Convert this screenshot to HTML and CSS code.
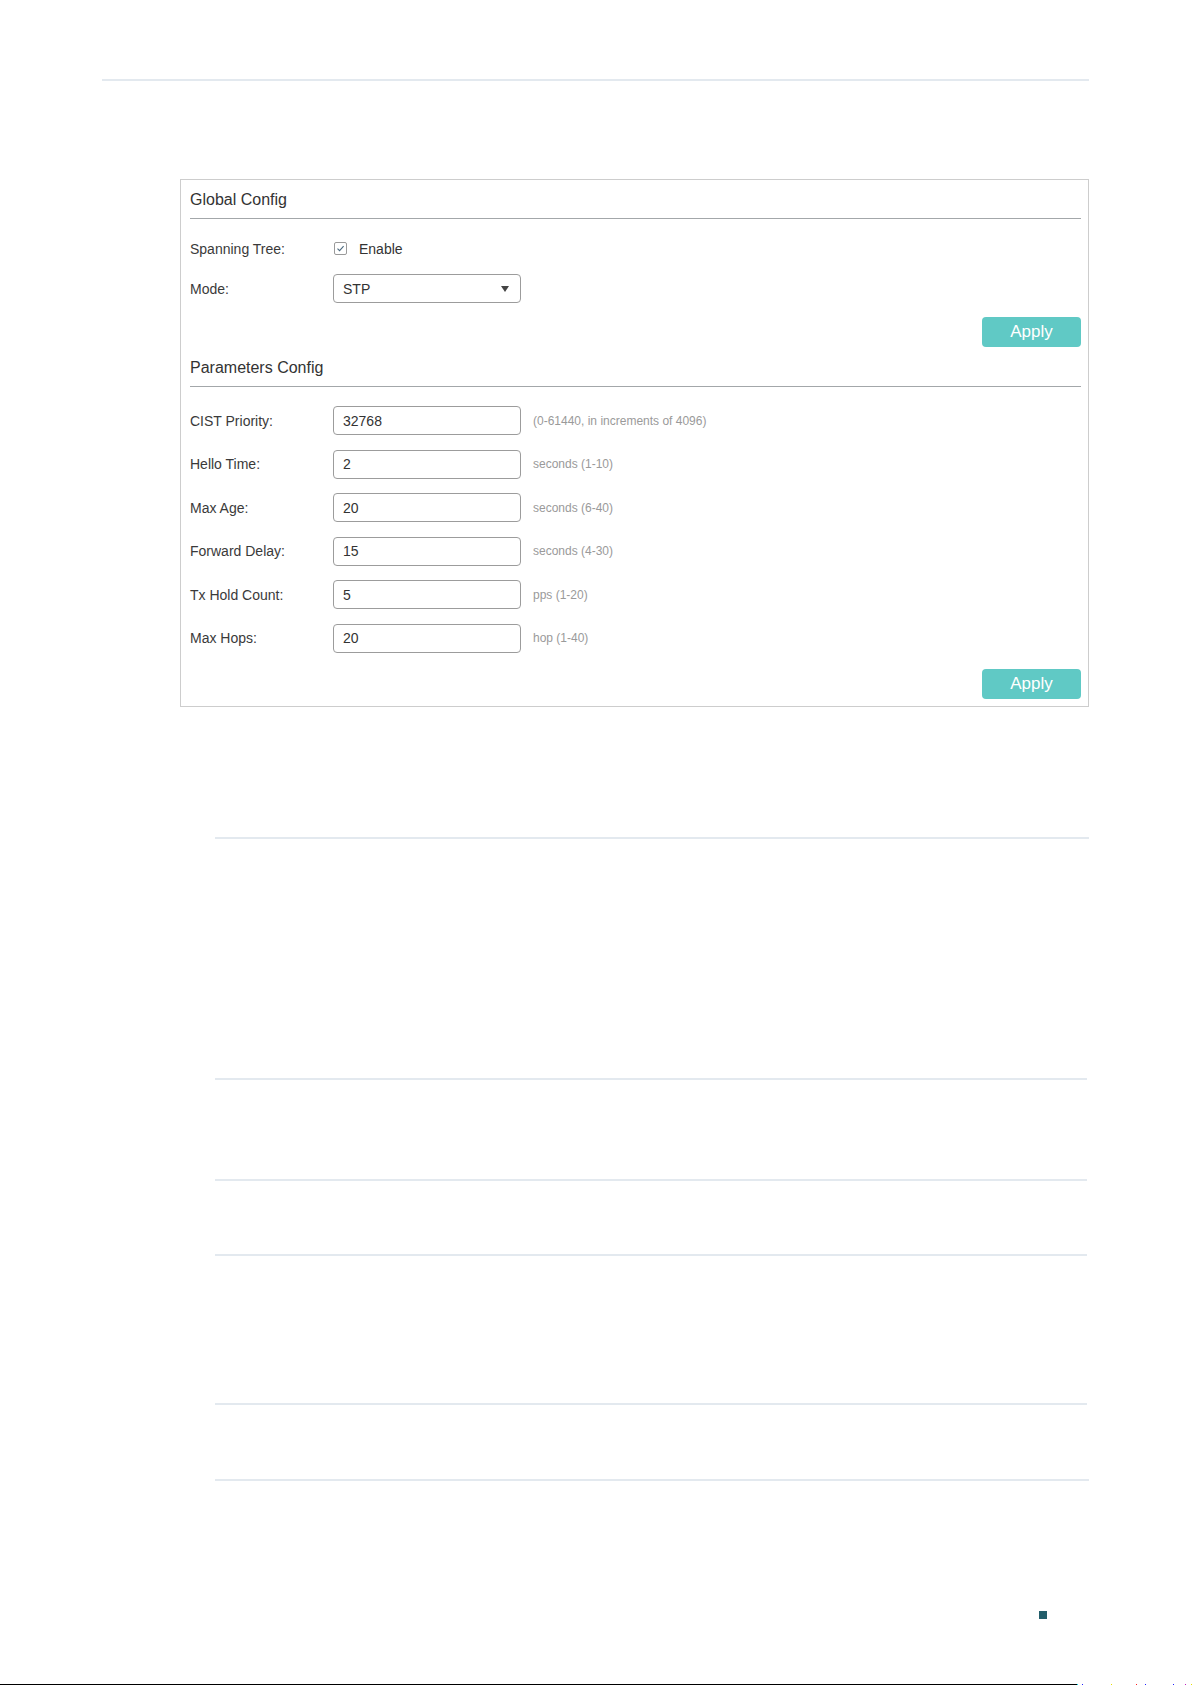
FILE: index.html
```html
<!DOCTYPE html>
<html lang="en">
<head>
    <meta charset="UTF-8">
    <meta name="viewport" content="width=device-width, initial-scale=1.0">
    <title>Spanning Tree</title>

    <link rel="stylesheet" href="styles.css">
</head>
<body>
    <div class="rule rule-top"></div>

    <form class="panel">
        <div class="section-title">Global Config</div>
        <div class="global-rows">
            <div class="row">
                <label class="label">Spanning Tree:</label>
                <label class="check">
                    <span class="box">
                        <svg width="9" height="9" viewBox="0 0 9 9"><path d="M1.5 4.6 L3.6 6.7 L7.6 2.2" fill="none" stroke="#4d6b80" stroke-width="1.1"/></svg>
                    </span>
                    Enable
                </label>
            </div>
            <div class="row">
                <label class="label">Mode:</label>
                <div class="select">
                    <span>STP</span>
                    <span class="caret"></span>
                </div>
            </div>
        </div>
        <div class="actions first">
            <button type="button" class="apply">Apply</button>
        </div>

        <div class="section-title second">Parameters Config</div>
        <div class="param-rows">
            <div class="row">
                <label class="label">CIST Priority:</label>
                <input class="field" type="text" value="32768">
                <span class="hint">(0-61440, in increments of 4096)</span>
            </div>
            <div class="row">
                <label class="label">Hello Time:</label>
                <input class="field" type="text" value="2">
                <span class="hint">seconds (1-10)</span>
            </div>
            <div class="row">
                <label class="label">Max Age:</label>
                <input class="field" type="text" value="20">
                <span class="hint">seconds (6-40)</span>
            </div>
            <div class="row">
                <label class="label">Forward Delay:</label>
                <input class="field" type="text" value="15">
                <span class="hint">seconds (4-30)</span>
            </div>
            <div class="row">
                <label class="label">Tx Hold Count:</label>
                <input class="field" type="text" value="5">
                <span class="hint">pps (1-20)</span>
            </div>
            <div class="row">
                <label class="label">Max Hops:</label>
                <input class="field" type="text" value="20">
                <span class="hint">hop (1-40)</span>
            </div>
        </div>
        <div class="actions last">
            <button type="button" class="apply">Apply</button>
        </div>
    </form>

    <div class="rule rule-1"></div>
    <div class="rule rule-2"></div>
    <div class="rule rule-3"></div>
    <div class="rule rule-4"></div>
    <div class="rule rule-5"></div>
    <div class="rule rule-6"></div>

    <div class="page-mark"></div>

    <div class="footer-line">
        <span class="black"></span>
        <span class="dot cyan"></span>
        <span class="dot blue gap-4"></span>
        <span class="dot yellow gap-28"></span>
        <span class="dot red gap-24"></span>
        <span class="dot blue gap-8"></span>
        <span class="dot blue gap-27"></span>
        <span class="dot magenta gap-11"></span>
        <span class="dot yellow gap-5"></span>
    </div>
</body>
</html>
```

FILE: styles.css
```css
* {
    margin: 0;
    padding: 0;
    box-sizing: border-box;
}
body {
    background-color: #fff;
    font-family: "Liberation Sans", Arial, sans-serif;
    color: #333;
    width: 1192px;
}
.rule {
    height: 2px;
    background-color: #e3e9ef;
    margin-left: 215px;
    width: 874px;
}
.rule-top {
    margin-top: 79px;
    margin-left: 102px;
    width: 987px;
}
.rule-1 { margin-top: 130px; }
.rule-2 { margin-top: 239px; width: 872px; }
.rule-3 { margin-top: 99px; width: 872px; }
.rule-4 { margin-top: 73px; width: 872px; }
.rule-5 { margin-top: 147px; width: 872px; }
.rule-6 { margin-top: 74px; }

.panel {
    margin: 98px 0 0 180px;
    width: 909px;
    height: 528px;
    border: 1px solid #cdcdcd;
    padding: 10px 7px 8px 9px;
}
.section-title {
    font-size: 16px;
    line-height: 20px;
    color: #333;
    padding-bottom: 8px;
    border-bottom: 1px solid #a3a7aa;
}
.section-title.second {
    margin-top: 11px;
}
.row {
    display: flex;
    align-items: center;
    height: 29px;
    font-size: 14px;
}
.label {
    width: 143px;
    color: #3a3a3a;
}
.global-rows {
    margin-top: 15px;
    display: flex;
    flex-direction: column;
    gap: 11px;
}
.param-rows {
    margin-top: 19px;
    display: flex;
    flex-direction: column;
    gap: 14.6px;
}
.check {
    display: flex;
    align-items: center;
    gap: 12px;
    color: #333;
    margin-left: 1px;
}
.check .box {
    width: 13px;
    height: 13px;
    border: 1px solid #9a9a9a;
    border-radius: 2px;
    display: flex;
    align-items: center;
    justify-content: center;
}
.select {
    width: 188px;
    height: 29px;
    border: 1px solid #9c9c9c;
    border-radius: 4px;
    display: flex;
    align-items: center;
    justify-content: space-between;
    padding: 0 11px 0 9px;
    color: #333;
}
.caret {
    width: 0;
    height: 0;
    border-left: 4.5px solid transparent;
    border-right: 4.5px solid transparent;
    border-top: 6px solid #444;
}
.field {
    width: 188px;
    height: 29px;
    border: 1px solid #9c9c9c;
    border-radius: 4px;
    padding: 0 9px;
    font-family: "Liberation Sans", Arial, sans-serif;
    font-size: 14px;
    color: #333;
    outline: none;
}
.hint {
    margin-left: 12px;
    font-size: 12px;
    color: #9a9a9a;
}
.actions {
    display: flex;
    justify-content: flex-end;
}
.actions.first {
    margin-top: 14px;
}
.actions.last {
    margin-top: 16px;
}
.apply {
    width: 99px;
    height: 30px;
    border: none;
    border-radius: 4px;
    background-color: #60c9c5;
    color: #fff;
    font-family: "Liberation Sans", Arial, sans-serif;
    font-size: 17px;
    cursor: pointer;
}

.page-mark {
    margin: 130px 0 0 1039px;
    width: 8px;
    height: 8px;
    background-color: #235e6b;
}
.footer-line {
    margin-top: 65px;
    height: 1px;
    display: flex;
}
.footer-line .black {
    width: 1077px;
    background-color: #000;
}
.dot {
    width: 1px;
    height: 1px;
}
.cyan { background-color: #00d8e0; }
.blue { background-color: #2020ff; }
.yellow { background-color: #e8e000; }
.red { background-color: #ff2020; }
.magenta { background-color: #c020c0; }
.gap-4 { margin-left: 4px; }
.gap-5 { margin-left: 5px; }
.gap-8 { margin-left: 8px; }
.gap-11 { margin-left: 11px; }
.gap-24 { margin-left: 24px; }
.gap-27 { margin-left: 27px; }
.gap-28 { margin-left: 28px; }
```
